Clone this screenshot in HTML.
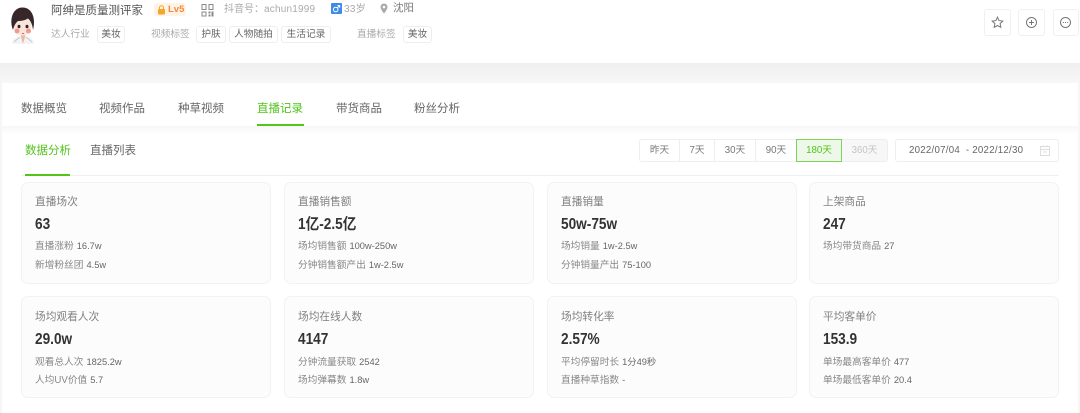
<!DOCTYPE html>
<html lang="zh"><head><meta charset="utf-8"><style>
*{box-sizing:border-box}
html,body{margin:0;padding:0}
body{width:1080px;height:413px;position:relative;overflow:hidden;background:#fff;font-family:"Liberation Sans","Noto Sans CJK SC",sans-serif;color:#666}
#w{position:absolute;left:0;top:0;width:1080px;height:413px;filter:blur(.3px)}
.a{position:absolute;white-space:nowrap;line-height:1}
.tag{position:absolute;top:26px;height:17px;border:1px solid #eee;border-radius:3px;font-size:9.7px;line-height:15px;text-align:center;color:#666;background:#fff;white-space:nowrap}
.lab{position:absolute;top:30px;font-size:9.7px;line-height:1;color:#aaa;white-space:nowrap}
.ib{position:absolute;top:9px;width:27px;height:27px;border:1px solid #f0f0f0;border-radius:3px;background:#fff}
.tab{position:absolute;top:102px;font-size:11.5px;line-height:14px;color:#666;white-space:nowrap}
.seg{position:absolute;top:139px;height:23px;font-size:9.7px;line-height:21px;text-align:center;color:#777;border:1px solid #eee;border-left:0;background:#fff}
.card{position:absolute;width:250px;height:102px;border:1px solid #f2f2f2;border-radius:7px;background:#fcfcfc}
.t{position:absolute;left:13px;top:13px;font-size:10.7px;line-height:12px;color:#808080;white-space:nowrap}
.v{position:absolute;left:13px;top:33px;font-size:15.500px;line-height:17px;font-weight:bold;color:#333;white-space:nowrap;transform:scaleX(.88);transform-origin:0 0}
.s{position:absolute;left:13px;font-size:9.7px;line-height:11px;color:#888;white-space:nowrap}
.s b{font-weight:normal;color:#666;margin-left:3px;font-size:9.3px}
.s1{top:58px}.s2{top:77px}
.r2 .t{top:14px}.r2 .v{top:34px}.r2 .s1{top:60px}.r2 .s2{top:78px}
</style></head><body><div id="w">
<div class="a" style="left:0;top:63px;width:1080px;height:20px;background:linear-gradient(#efefef,#f7f7f7)"></div>
<div class="a" style="left:0;top:83px;width:2px;height:330px;background:#f6f6f6"></div>
<div class="a" style="left:1078px;top:83px;width:2px;height:330px;background:#f6f6f6"></div>
<div class="a" style="left:2px;top:83px;width:1076px;height:330px;background:#fff;border-radius:3px 3px 0 0"></div>

<svg class="a" style="left:6px;top:4px" width="34" height="40" viewBox="0 0 34 40">
<path d="M6 40c0-5 5-8 11-8s11 3 11 8z" fill="#f3f3f5"/>
<path d="M8 38l6-5M26 38l-6-5" stroke="#b5bcc6" stroke-width=".8"/>
<path d="M14.500 31l2.500 9 2.500-9z" fill="#eab9a3"/>
<ellipse cx="16.500" cy="21" rx="9" ry="10.500" fill="#f8e6dc"/>
<path d="M7 26C3 16 6.500 3.500 16.500 3.500S30 15 27 26c-.5-5-2-9-5-11.500-3 2-7 2.500-10 2.500-2.500 2-4 5-5 9z" fill="#38272a"/>
<ellipse cx="13" cy="22.500" rx="1.500" ry="1.800" fill="#332628"/><ellipse cx="21" cy="22.500" rx="1.500" ry="1.800" fill="#332628"/>
<circle cx="11" cy="27" r="2.500" fill="#f5998c"/><circle cx="22.500" cy="27" r="2.500" fill="#f5998c"/>
<path d="M16 29.500h2" stroke="#d9655a" stroke-width="1"/>
</svg>

<div class="a" style="left:51px;top:5px;font-size:11.500px;line-height:13px;color:#555">阿绅是质量测评家</div>
<div class="a" style="left:154px;top:3px;width:32px;height:13px;background:#fff3e8;border-radius:3px"></div>
<svg class="a" style="left:157px;top:5px" width="9" height="10" viewBox="0 0 9 10"><path d="M2.500 4V2.800a2 2 0 014 0V4" fill="none" stroke="#f5a623" stroke-width="1"/><rect x="1" y="4" width="7" height="5.500" rx="1" fill="#f5a623"/></svg>
<div class="a" style="left:168px;top:4px;font-size:9.500px;line-height:11px;font-weight:bold;color:#f58a33">Lv5</div>
<svg class="a" style="left:201px;top:4px" width="13" height="13" viewBox="0 0 13 13" fill="#8a8a8a"><path d="M.5 0h5v6h-5zM1.500 1v4h3V1zM7.500 0h5v6h-5zM8.500 1v4h3V1zM.5 7.500h5v5h-5zM1.500 8.500v3h3v-3zM7.500 7.500h2v2h-2zM10.500 7.500h2v5h-2zM7.500 10.500h2v2h-2z"/></svg>
<div class="a" style="left:224px;top:4px;font-size:10px;line-height:11px;color:#aaa">抖音号：<span style="letter-spacing:.2px">achun1999</span></div>
<div class="a" style="left:331px;top:3px;width:11px;height:11px;background:#3d8be8;border-radius:1px"></div>
<svg class="a" style="left:331px;top:3px" width="11" height="11" viewBox="0 0 11 11" fill="none" stroke="#fff" stroke-width="1"><circle cx="4.700" cy="6.500" r="2.300"/><path d="M6.500 4.700l2-2M6.500 2.500h2.200v2.200"/></svg>
<div class="a" style="left:344px;top:4px;font-size:10.300px;line-height:11px;color:#aaa">33岁</div>
<svg class="a" style="left:380px;top:3px" width="8" height="11" viewBox="0 0 8 11"><path d="M4 .5a3.500 3.500 0 00-3.500 3.500C.5 6.500 4 10.500 4 10.500S7.500 6.500 7.500 4A3.500 3.500 0 004 .5z" fill="#aaa"/><circle cx="4" cy="4" r="1.300" fill="#fff"/></svg>
<div class="a" style="left:393px;top:3px;font-size:10.500px;line-height:11px;color:#777">沈阳</div>

<div class="lab" style="left:51px">达人行业</div>
<div class="tag" style="left:97px;width:28px">美妆</div>
<div class="lab" style="left:151px">视频标签</div>
<div class="tag" style="left:196px;width:30px">护肤</div>
<div class="tag" style="left:229px;width:49px">人物随拍</div>
<div class="tag" style="left:281px;width:50px">生活记录</div>
<div class="lab" style="left:357px">直播标签</div>
<div class="tag" style="left:403px;width:29px">美妆</div>

<div class="ib" style="left:984px"></div><div class="ib" style="left:1018px"></div><div class="ib" style="left:1053px;width:26px"></div>
<svg class="a" style="left:991px;top:16px" width="13" height="13" viewBox="0 0 13 13"><path d="M6.500 1.200l1.600 3.400 3.700.5-2.700 2.500.7 3.700-3.300-1.800-3.300 1.800.7-3.700L1.200 5.100l3.700-.5z" fill="none" stroke="#777" stroke-width="1"/></svg>
<svg class="a" style="left:1025px;top:16px" width="13" height="13" viewBox="0 0 13 13" fill="none" stroke="#777"><circle cx="6.500" cy="6.500" r="5"/><path d="M4 6.500h5M6.500 4v5"/></svg>
<svg class="a" style="left:1059px;top:16px" width="13" height="13" viewBox="0 0 13 13" fill="none" stroke="#777"><circle cx="6.500" cy="6.500" r="5"/><path d="M3.800 6.500h1M6 6.500h1M8.200 6.500h1"/></svg>

<div class="a" style="left:2px;top:126px;width:1076px;height:9px;background:linear-gradient(#f7f7f7,#fff)"></div>
<div class="tab" style="left:21px">数据概览</div>
<div class="tab" style="left:99px">视频作品</div>
<div class="tab" style="left:178px">种草视频</div>
<div class="tab" style="left:257px;color:#52c41a">直播记录</div>
<div class="tab" style="left:336px">带货商品</div>
<div class="tab" style="left:414px">粉丝分析</div>
<div class="a" style="left:257px;top:124px;width:47px;height:2px;background:#52c41a"></div>

<div class="tab" style="left:25px;top:144px;color:#52c41a">数据分析</div>
<div class="tab" style="left:90px;top:144px">直播列表</div>
<div class="a" style="left:21px;top:175px;width:1038px;height:1px;background:#f0f0f0"></div>
<div class="a" style="left:25px;top:174px;width:45px;height:2px;background:#52c41a"></div>

<div class="seg" style="left:639px;width:41px;border-left:1px solid #eee;border-radius:3px 0 0 3px">昨天</div>
<div class="seg" style="left:680px;width:35px">7天</div>
<div class="seg" style="left:715px;width:41px">30天</div>
<div class="seg" style="left:756px;width:41px">90天</div>
<div class="seg" style="left:796px;width:46px;border:1px solid #7fd35a;background:#eef8e8;color:#52c41a">180天</div>
<div class="seg" style="left:842px;width:46px;background:#f7f7f7;color:#c4c4c4;border-radius:0 3px 3px 0">360天</div>
<div class="a" style="left:895px;top:139px;width:164px;height:23px;border:1px solid #eee;border-radius:3px"></div>
<div class="a" style="left:909px;top:145px;font-size:9.700px;line-height:11px;color:#666;letter-spacing:.25px">2022/07/04 &nbsp;- 2022/12/30</div>
<svg class="a" style="left:1040px;top:145px" width="10" height="11" viewBox="0 0 10 11" fill="none" stroke="#ddd"><rect x=".5" y="1.500" width="9" height="9"/><path d="M.5 4.500h9M3 .5v2M7 .5v2M3 7h4"/></svg>

<div class="card" style="left:21px;top:182px"><div class="t">直播场次</div><div class="v">63</div><div class="s s1">直播涨粉<b>16.7w</b></div><div class="s s2">新增粉丝团<b>4.5w</b></div></div>
<div class="card" style="left:284px;top:182px"><div class="t">直播销售额</div><div class="v">1亿-2.5亿</div><div class="s s1">场均销售额<b>100w-250w</b></div><div class="s s2">分钟销售额产出<b>1w-2.5w</b></div></div>
<div class="card" style="left:547px;top:182px"><div class="t">直播销量</div><div class="v">50w-75w</div><div class="s s1">场均销量<b>1w-2.5w</b></div><div class="s s2">分钟销量产出<b>75-100</b></div></div>
<div class="card" style="left:809px;top:182px"><div class="t">上架商品</div><div class="v">247</div><div class="s s1">场均带货商品<b>27</b></div></div>

<div class="card r2" style="left:21px;top:296px"><div class="t">场均观看人次</div><div class="v">29.0w</div><div class="s s1">观看总人次<b>1825.2w</b></div><div class="s s2">人均UV价值<b>5.7</b></div></div>
<div class="card r2" style="left:284px;top:296px"><div class="t">场均在线人数</div><div class="v">4147</div><div class="s s1">分钟流量获取<b>2542</b></div><div class="s s2">场均弹幕数<b>1.8w</b></div></div>
<div class="card r2" style="left:547px;top:296px"><div class="t">场均转化率</div><div class="v">2.57%</div><div class="s s1">平均停留时长<b>1分49秒</b></div><div class="s s2">直播种草指数<b>-</b></div></div>
<div class="card r2" style="left:809px;top:296px"><div class="t">平均客单价</div><div class="v">153.9</div><div class="s s1">单场最高客单价<b>477</b></div><div class="s s2">单场最低客单价<b>20.4</b></div></div>
</div></body></html>
